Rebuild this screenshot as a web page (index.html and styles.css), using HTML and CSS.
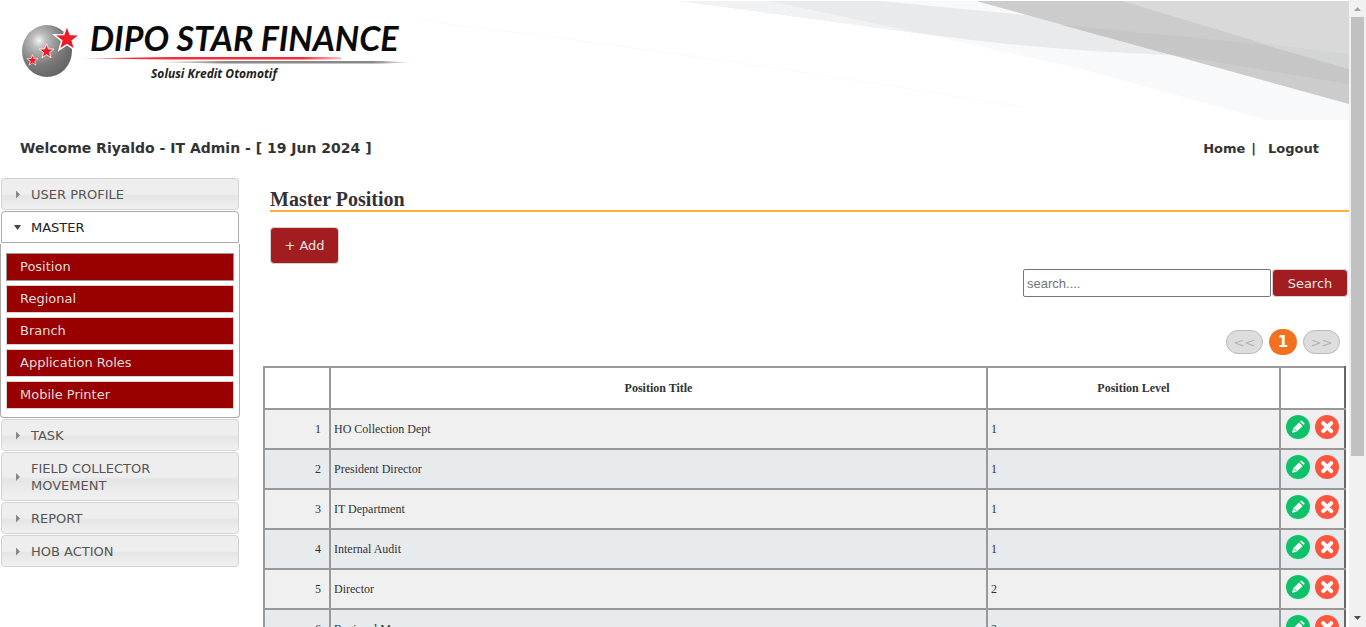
FILE: index.html
```html
<!DOCTYPE html>
<html lang="en">
<head>
<meta charset="utf-8">
<title>Master Position</title>
<link rel="stylesheet" href="styles.css">
</head>
<body>
<svg class="sprite" aria-hidden="true">
  <symbol id="edit" viewBox="0 0 24 24">
    <circle cx="12" cy="12" r="12" fill="#0fc26a"/>
    <path d="M6 18l1.400-5 5.600-5.600 3.600 3.600-5.600 5.600zM14 6.400l1.200-1.200 3.600 3.600-1.200 1.200z" fill="#fff"/>
    <path d="M7.800 13.400l2.800 2.800" stroke="#0fc26a" stroke-width="1"/>
  </symbol>
  <symbol id="delete" viewBox="0 0 24 24">
    <circle cx="12" cy="12" r="12" fill="#ff5640"/>
    <path d="M8.200 8.200l8 8M16.200 8.200l-8 8" stroke="#fff" stroke-width="4" stroke-linecap="round"/>
  </symbol>
  <symbol id="star" viewBox="-10 -10 20 20">
    <path d="M0-9L2.200-3L8.600-2.800L3.500 1.200L5.300 7.300L0 3.700L-5.300 7.300L-3.500 1.200L-8.600-2.800L-2.200-3Z"/>
  </symbol>
</svg>
<div class="app">
  <div class="page">
    <header class="banner">
      <svg class="logo" width="430" height="119" viewBox="0 1 430 119" role="img" aria-label="Dipo Star Finance">
        <defs>
          <radialGradient id="ball" cx=".34" cy=".3" r=".72"><stop offset="0" stop-color="#f4f4f4"/><stop offset=".2" stop-color="#bdbdbd"/><stop offset=".65" stop-color="#7c797a"/><stop offset="1" stop-color="#666"/></radialGradient>
          <linearGradient id="red"><stop offset="0" stop-color="#ef3038" stop-opacity=".3"/><stop offset=".2" stop-color="#ef3038"/><stop offset=".85" stop-color="#ef3038"/><stop offset="1" stop-color="#ef3038" stop-opacity=".3"/></linearGradient>
          <linearGradient id="grey"><stop offset="0" stop-color="#888" stop-opacity=".1"/><stop offset=".3" stop-color="#888"/><stop offset=".85" stop-color="#888"/><stop offset="1" stop-color="#888" stop-opacity=".1"/></linearGradient>
        </defs>
        <ellipse cx="47" cy="51" rx="25" ry="26" fill="url(#ball)"/>
        <g fill="#ed1c24" stroke="#fff" stroke-width="1">
          <use href="#star" x="52" y="24" width="30" height="30"/>
          <use href="#star" x="38" y="43" width="17" height="17"/>
          <use href="#star" x="26" y="54" width="13" height="13"/>
        </g>
        <text class="logo-name" x="90" y="51">DIPO STAR FINANCE</text>
        <path d="M80 58.500L170 57H341V59.500H170Z" fill="url(#red)"/>
        <path d="M149 62L220 61H383L412 62.500L383 63.500H220Z" fill="url(#grey)"/>
        <text class="logo-tag" x="151" y="78">Solusi Kredit Otomotif</text>
      </svg>
      <svg class="rays" viewBox="0 1 949 119" preserveAspectRatio="xMaxYMin slice" aria-hidden="true">
        <path d="M18 20Q330 58 622 107" fill="none" stroke="#f9fafa"/>
        <path d="M280 1H949V120H867L678 68L524 34Z" fill="#f8f9fb"/>
        <path d="M280 1H480L647 17L700 30L770 55Q640 50 524 34Z" fill="#e9eaec"/>
        <path d="M280 1H370L524 34Z" fill="#f1f2f4"/>
        <path d="M576 1H949V104Z" fill="#ccc"/>
        <path d="M722 1H949V69Z" fill="#d9d9da"/>
        <path d="M662 25L860 44L949 69V84L768 54Z" fill="#c5c6c5"/>
        <path d="M855 42L949 54V69Z" fill="#d3d5d4"/>
      </svg>
    </header>
    <div class="userbar">
      <span class="welcome">Welcome Riyaldo - IT Admin - [ 19 Jun 2024 ]</span>
      <nav class="usernav"><a href="#home">Home</a><span>|</span><a class="logout" href="#logout">Logout</a></nav>
    </div>
    <div class="columns">
      <aside class="sidebar">
        <button class="section" type="button"><i class="arrow"></i>USER PROFILE</button>
        <button class="section open" type="button" aria-expanded="true"><i class="arrow"></i>MASTER</button>
        <nav class="submenu">
          <a class="current" href="#position">Position</a>
          <a href="#regional">Regional</a>
          <a href="#branch">Branch</a>
          <a href="#roles">Application Roles</a>
          <a href="#printer">Mobile Printer</a>
        </nav>
        <button class="section" type="button"><i class="arrow"></i>TASK</button>
        <button class="section" type="button"><i class="arrow"></i>FIELD COLLECTOR MOVEMENT</button>
        <button class="section" type="button"><i class="arrow"></i>REPORT</button>
        <button class="section" type="button"><i class="arrow"></i>HOB ACTION</button>
      </aside>
      <main class="content">
        <h1>Master Position</h1>
        <button class="btn add" type="button">+ Add</button>
        <form class="search">
          <input type="text" placeholder="search...." aria-label="Search positions">
          <button class="btn find" type="button">Search</button>
        </form>
        <nav class="pager" aria-label="Pages">
          <button class="step" type="button" disabled>&lt;&lt;</button>
          <button class="num" type="button">1</button>
          <button class="step" type="button" disabled>&gt;&gt;</button>
        </nav>
        <table class="grid">
          <colgroup><col class="c-no"><col><col class="c-level"><col class="c-act"></colgroup>
          <thead><tr><th></th><th>Position Title</th><th>Position Level</th><th></th></tr></thead>
          <tbody>
            <tr><td class="no">1</td><td>HO Collection Dept</td><td>1</td><td><div class="acts"><button type="button" aria-label="Edit"><svg><use href="#edit"/></svg></button><button type="button" aria-label="Delete"><svg><use href="#delete"/></svg></button></div></td></tr>
            <tr><td class="no">2</td><td>President Director</td><td>1</td><td><div class="acts"><button type="button" aria-label="Edit"><svg><use href="#edit"/></svg></button><button type="button" aria-label="Delete"><svg><use href="#delete"/></svg></button></div></td></tr>
            <tr><td class="no">3</td><td>IT Department</td><td>1</td><td><div class="acts"><button type="button" aria-label="Edit"><svg><use href="#edit"/></svg></button><button type="button" aria-label="Delete"><svg><use href="#delete"/></svg></button></div></td></tr>
            <tr><td class="no">4</td><td>Internal Audit</td><td>1</td><td><div class="acts"><button type="button" aria-label="Edit"><svg><use href="#edit"/></svg></button><button type="button" aria-label="Delete"><svg><use href="#delete"/></svg></button></div></td></tr>
            <tr><td class="no">5</td><td>Director</td><td>2</td><td><div class="acts"><button type="button" aria-label="Edit"><svg><use href="#edit"/></svg></button><button type="button" aria-label="Delete"><svg><use href="#delete"/></svg></button></div></td></tr>
            <tr><td class="no">6</td><td>Regional M</td><td>2</td><td><div class="acts"><button type="button" aria-label="Edit"><svg><use href="#edit"/></svg></button><button type="button" aria-label="Delete"><svg><use href="#delete"/></svg></button></div></td></tr>
          </tbody>
        </table>
      </main>
    </div>
  </div>
  <div class="scrollbar" aria-hidden="true">
    <i class="tri up"></i>
    <div class="track"><div class="thumb"></div></div>
    <i class="tri down"></i>
  </div>
</div>
</body>
</html>
```
FILE: styles.css
```css
* { box-sizing: border-box; }
body { margin: 0; background: #fff; color: #333; font-family: Verdana, "DejaVu Sans", sans-serif; font-size: 13px; }
button, input { font: inherit; margin: 0; }
a { color: inherit; text-decoration: none; }
.sprite { display: none; }
.app { display: flex; height: 100vh; overflow: hidden; }
.page { flex: 1; min-width: 0; overflow: hidden; padding-top: 1px; }

.banner { display: flex; justify-content: space-between; height: 119px; background: #fff; }
.logo { flex: none; }
.rays { flex: 1; min-width: 0; height: 119px; margin-left: -30px; }
.logo-name { font: italic 700 34px Lato, sans-serif; fill: #0a0a0a; }
.logo-tag { font: italic 700 12px "Open Sans", sans-serif; fill: #222; }

.userbar { display: flex; justify-content: space-between; align-items: center; height: 56px; margin-bottom: 2px; padding: 0 30px 0 20px; font-weight: 700; }
.welcome { font-size: 14px; }
.usernav { display: flex; gap: 6px; }
.logout { margin-left: 6px; }

.columns { display: flex; align-items: flex-start; gap: 23px; }
.sidebar { flex: none; width: 240px; display: flex; flex-direction: column; gap: 1px; }
.section { display: flex; align-items: center; gap: 10px; margin: 0 1px; padding: 7px 60px 6px 13px; border: 1px solid #d3d3d3; border-radius: 4px; background: linear-gradient(#eee 0 50%, #e5e5e5 56%, #f1f1f1); color: #555; line-height: 17px; text-align: left; }
.arrow { flex: none; width: 6px; height: 8px; background: #888; clip-path: polygon(1px 0, 5px 50%, 1px 100%); }
.open { border-color: #aaa; border-radius: 4px 4px 0 0; background: #fff; color: #212121; gap: 9px; padding-left: 11px; }
.open .arrow { width: 9px; height: 5px; background: #454545; clip-path: polygon(1px 0, 8px 0, 50% 100%); }
.submenu { display: flex; flex-direction: column; gap: 4px; padding: 9px 5px 8px; border: 1px solid #aaa; border-top: 0; border-radius: 0 0 4px 4px; }
.submenu a { padding: 4px 13px 5px; border: 1px solid #d3d3d3; background: #900; color: #ddd; line-height: 17px; }
.submenu .current { border-color: #999; }

.content { flex: 1; min-width: 0; }
h1 { margin: 10px 0 0 7px; border-bottom: 2px solid #fbb040; font: 700 20px/22px "Liberation Serif", serif; }
.btn { border: 1px solid #d3d3d3; border-radius: 4px; background: #a31c20; color: #e6e6e6; padding: 0; }
.add { display: block; width: 69px; height: 37px; margin: 15px 0 0 7px; }
.search { display: flex; justify-content: flex-end; gap: 1px; margin: 5px 1px 0 0; }
.search input { width: 248px; height: 28px; padding: 0 3px; border: 1px solid #767676; border-radius: 2px; font: 13px "Liberation Sans", sans-serif; }
.search input::placeholder { color: #757575; }
.find { width: 76px; height: 28px; }
.pager { display: flex; justify-content: flex-end; align-items: center; gap: 6px; margin: 32px 9px 0 0; }
.step { width: 37px; height: 24px; padding: 0; border: 1px solid #bbb; border-radius: 12px; background: #ddd; color: #b4b4b4; }
.num { width: 28px; height: 26px; padding: 0; border: 0; border-radius: 13px; background: #f37021; color: #fff; font-size: 15px; font-weight: 700; }

.grid { width: calc(100% - 3px); margin-top: 11px; table-layout: fixed; border-collapse: collapse; border: 2px solid #888; border-right-color: #666; font: 12px "Liberation Serif", serif; }
.c-no { width: 66px; }
.c-level { width: 293px; }
.c-act { width: 65px; }
.grid th, .grid td { height: 40px; padding: 0 3px; border: 2px solid #999; text-align: left; }
.grid th { height: 42px; text-align: center; }
.grid td:last-child, .grid th:last-child { border-right-color: #666; }
.grid .no { text-align: right; padding-right: 8px; }
.grid tbody tr { background: #f0f0f0; }
.grid tbody tr:nth-child(even) { background: #e7ebee; }
.acts { display: flex; gap: 5px; height: 24px; margin: -4px 0 0 2px; }
.acts button { width: 24px; height: 24px; padding: 0; border: 0; background: none; }
.acts svg { display: block; width: 24px; height: 24px; }

.scrollbar { flex: none; width: 17px; padding: 7px 2px; display: flex; flex-direction: column; align-items: center; background: #f1f1f1; }
.track { flex: 1; width: 100%; padding: 6px 0; }
.thumb { height: 74%; background: #c1c1c1; }
.tri { width: 7px; height: 4px; }
.up { background: #a3a3a3; clip-path: polygon(50% 0, 100% 100%, 0 100%); }
.down { background: #505050; clip-path: polygon(0 0, 100% 0, 50% 100%); }
```
